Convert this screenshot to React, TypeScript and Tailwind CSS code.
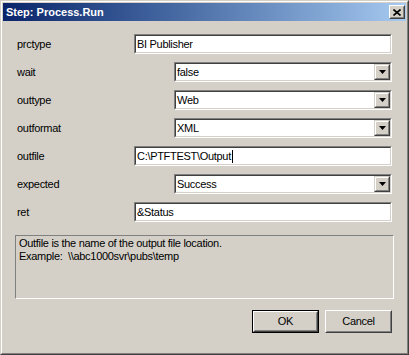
const font = { fontFamily: '"Liberation Sans", Arial, sans-serif' }

function Sunken({ children }: { children: React.ReactNode }) {
  return (
    <div className="h-[20px] border border-t-[#808080] border-l-[#808080] border-b-white border-r-white">
      <div className="relative h-full border border-t-[#404040] border-l-[#404040] border-b-[#d4d0c8] border-r-[#d4d0c8] bg-white">
        {children}
      </div>
    </div>
  )
}

function TextField({ value, caret }: { value: string; caret?: boolean }) {
  return (
    <Sunken>
      <div className="flex h-full items-center pl-[1px] text-black">
        <span>{value}</span>
        {caret && <span className="ml-[1px] h-[13px] w-[1px] bg-black" />}
      </div>
    </Sunken>
  )
}

function SelectField({ value }: { value: string }) {
  return (
    <Sunken>
      <div className="flex h-full items-center pl-[1px] text-black">
        <span>{value}</span>
      </div>
      <div className="absolute right-0 top-0 flex h-[16px] w-[16px] items-center justify-center border border-t-[#d4d0c8] border-l-[#d4d0c8] border-b-[#404040] border-r-[#404040] bg-[#d4d0c8]">
        <div className="flex h-full w-full items-center justify-center border border-t-white border-l-white border-b-[#808080] border-r-[#808080]">
          <svg width="7" height="4" viewBox="0 0 7 4">
            <path d="M0 0h7L3.5 4z" fill="#000" />
          </svg>
        </div>
      </div>
    </Sunken>
  )
}

const rows: { label: string; value: string; kind: 'text' | 'select'; caret?: boolean }[] = [
  { label: 'prctype', value: 'BI Publisher', kind: 'text' },
  { label: 'wait', value: 'false', kind: 'select' },
  { label: 'outtype', value: 'Web', kind: 'select' },
  { label: 'outformat', value: 'XML', kind: 'select' },
  { label: 'outfile', value: 'C:\\PTFTEST\\Output', kind: 'text', caret: true },
  { label: 'expected', value: 'Success', kind: 'select' },
  { label: 'ret', value: '&Status', kind: 'text' },
]

function Button({ label, isDefault }: { label: string; isDefault?: boolean }) {
  return (
    <div className={`h-[23px] w-[67px] ${isDefault ? 'border border-black' : ''}`}>
      <div className="h-full border border-t-white border-l-white border-b-[#404040] border-r-[#404040]">
        <div className="flex h-full items-center justify-center border border-t-[#d4d0c8] border-l-[#d4d0c8] border-b-[#808080] border-r-[#808080] text-black">
          {label}
        </div>
      </div>
    </div>
  )
}

export default function App() {
  return (
    <div
      className="h-[355px] w-[409px] border border-t-[#d4d0c8] border-l-[#d4d0c8] border-b-[#404040] border-r-[#404040] bg-[#d4d0c8] text-[11px] tracking-[-0.3px]"
      style={font}
    >
      <div className="flex h-full flex-col border border-t-white border-l-white border-b-[#808080] border-r-[#808080] p-[1px]">
        {/* Title bar */}
        <div className="flex h-[18px] items-center justify-between bg-linear-to-r from-[#0a246a] to-[#a6caf0] pl-[3px] pr-[1px]">
          <span className="text-[11px] font-bold tracking-normal text-white">Step: Process.Run</span>
          <div className="h-[14px] w-[16px] border border-t-white border-l-white border-b-[#404040] border-r-[#404040] bg-[#d4d0c8]">
            <div className="flex h-full items-center justify-center border border-t-[#d4d0c8] border-l-[#d4d0c8] border-b-[#808080] border-r-[#808080]">
              <svg width="8" height="7" viewBox="0 0 8 7">
                <path d="M0.5 0.5L7.5 6.5M7.5 0.5L0.5 6.5" stroke="#000" strokeWidth="1.6" />
              </svg>
            </div>
          </div>
        </div>

        {/* Fields */}
        <div className="flex flex-col gap-[8px] pl-[14px] pr-[14px] pt-[13px]">
          {rows.map(r => (
            <div key={r.label} className="flex h-[20px] items-center">
              <span className="w-[117px] text-black">{r.label}</span>
              <div className={`flex-1 ${r.kind === 'select' ? 'pl-[40px]' : ''}`}>
                {r.kind === 'text' ? <TextField value={r.value} caret={r.caret} /> : <SelectField value={r.value} />}
              </div>
            </div>
          ))}
        </div>

        {/* Help */}
        <div className="ml-[12px] mr-[12px] mt-[13px] h-[64px] border border-t-[#808080] border-l-[#808080] border-b-white border-r-white px-[3px] pt-[1px] leading-[13px] text-black">
          <p>Outfile is the name of the output file location.</p>
          <p>Example:&nbsp; \\abc1000svr\pubs\temp</p>
        </div>

        {/* Buttons */}
        <div className="mt-[11px] flex justify-end gap-[6px] pr-[14px]">
          <Button label="OK" isDefault />
          <Button label="Cancel" />
        </div>
      </div>
    </div>
  )
}
